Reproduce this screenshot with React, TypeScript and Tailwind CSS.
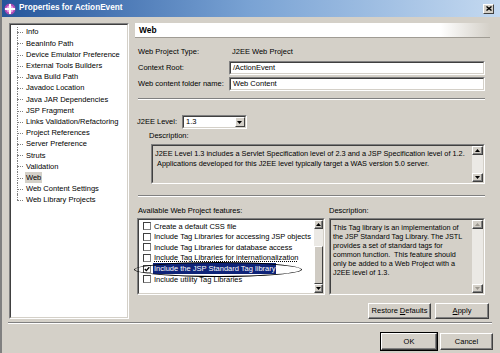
import React from 'react';

const treeItems = [
  'Info',
  'BeanInfo Path',
  'Device Emulator Preference',
  'External Tools Builders',
  'Java Build Path',
  'Javadoc Location',
  'Java JAR Dependencies',
  'JSP Fragment',
  'Links Validation/Refactoring',
  'Project References',
  'Server Preference',
  'Struts',
  'Validation',
  'Web',
  'Web Content Settings',
  'Web Library Projects',
];

const features = [
  { label: 'Create a default CSS file', checked: false },
  { label: 'Include Tag Libraries for accessing JSP objects', checked: false },
  { label: 'Include Tag Libraries for database access', checked: false },
  { label: 'Include Tag Libraries for internationalization', checked: false, underline: true },
  { label: 'Include the JSP Standard Tag library', checked: true, selected: true },
  { label: 'Include utility Tag Libraries', checked: false },
];

function Arrow({ dir, disabled }: { dir: 'up' | 'down'; disabled?: boolean }) {
  return (
    <div className="flex h-[9px] w-full items-center justify-center border border-t-white border-l-white border-r-[#404040] border-b-[#404040] bg-[#d4d0c8] shadow-[inset_-1px_-1px_0_#808080]">
      <svg width="5" height="3" viewBox="0 0 5 3">
        {dir === 'up' ? (
          <polygon points="0,3 5,3 2.5,0" fill={disabled ? '#9a968e' : '#000'} />
        ) : (
          <polygon points="0,0 5,0 2.5,3" fill={disabled ? '#9a968e' : '#000'} />
        )}
      </svg>
    </div>
  );
}

function ScrollBar({ width, thumb, disabled }: { width: string; thumb?: boolean; disabled?: boolean }) {
  return (
    <div className={`flex ${width} shrink-0 flex-col self-stretch`}>
      <Arrow dir="up" disabled={disabled} />
      <div className="flex flex-1 flex-col bg-[#ebe9e5]">
        {thumb && (
          <>
            <div className="h-[17px]" />
            <div className="flex-1 border border-t-white border-l-white border-r-[#404040] border-b-[#404040] bg-[#cfcbc3]" />
          </>
        )}
      </div>
      <Arrow dir="down" disabled={disabled} />
    </div>
  );
}

function Button({ children, w, isDefault }: { children: React.ReactNode; w: string; isDefault?: boolean }) {
  return (
    <div
      className={`flex ${w} items-center justify-center border border-t-white border-l-white border-r-[#404040] border-b-[#404040] bg-[#d4d0c8] shadow-[inset_-1px_-1px_0_#808080] ${
        isDefault ? 'outline outline-1 outline-black' : ''
      }`}
    >
      {children}
    </div>
  );
}

function Sunken({ className, children }: { className: string; children?: React.ReactNode }) {
  return (
    <div className={`border border-t-[#808080] border-l-[#808080] border-r-white border-b-white ${className}`}>
      <div className="flex h-full w-full border border-t-[#404040] border-l-[#404040] border-r-[#d4d0c8] border-b-[#d4d0c8]">
        {children}
      </div>
    </div>
  );
}

function Etched({ className }: { className: string }) {
  return <div className={`h-[2px] border-t border-t-[#808080] border-b border-b-white ${className}`} />;
}

export default function App() {
  return (
    <div className="flex h-[353px] w-[500px] flex-col overflow-hidden border-l-2 border-l-[#808080] bg-[#d4d0c8] font-['Liberation_Sans',Arial,sans-serif] text-[7.5px] leading-none text-black">
      {/* Title bar */}
      <div className="flex h-[17px] shrink-0 items-center bg-gradient-to-r from-[#24559b] via-[#7aa3d4] to-[#c4d9f0] pl-[2px] pr-[6px]">
        <svg width="12" height="12" viewBox="0 0 12 12" className="mr-[3px]">
          <circle cx="6" cy="6" r="5.5" fill="#b04cb4" />
          <circle cx="6" cy="6" r="3.6" fill="#e79be6" />
          <rect x="5" y="1" width="2" height="10" fill="#fff" />
          <rect x="1" y="5" width="10" height="2" fill="#fff" />
        </svg>
        <span className="text-[8.2px] font-bold text-white">Properties for ActionEvent</span>
        <div className="ml-auto flex h-[10px] w-[11px] items-center justify-center border border-t-white border-l-white border-r-[#404040] border-b-[#404040] bg-[#d4d0c8]">
          <svg width="6" height="5" viewBox="0 0 6 5">
            <path d="M0.5 0.5 L5.5 4.5 M5.5 0.5 L0.5 4.5" stroke="#000" strokeWidth="1.4" />
          </svg>
        </div>
      </div>

      {/* Main */}
      <div className="flex pl-[7px] pt-[6px]">
        {/* Tree */}
        <Sunken className="h-[296px] w-[120px] shrink-0 bg-white">
          <div className="flex w-full flex-col bg-white pt-[1.6px]">
            {treeItems.map((item, i) => {
              const last = i === treeItems.length - 1;
              return (
                <div key={item} className="relative flex h-[11.2px] items-center pl-[14px]">
                  <span
                    className={`absolute left-[6px] top-0 border-l border-dotted border-[#808080] ${last ? 'h-1/2' : 'h-full'}`}
                  />
                  <span className="absolute left-[6px] top-1/2 w-[6px] border-t border-dotted border-[#808080]" />
                  <span className={item === 'Web' ? 'bg-[#d4d0c8] px-[1px] py-[1.5px]' : 'px-[1px]'}>{item}</span>
                </div>
              );
            })}
          </div>
        </Sunken>

        {/* Right panel */}
        <div className="ml-[6px] flex w-[355px] flex-col">
          <div className="flex h-[15px] items-center border-b border-b-[#a09c94] bg-gradient-to-r from-white from-[86%] to-[#d4d0c8] pl-[4px] text-[8.4px] font-bold">
            Web
          </div>

          <div className="ml-[3px] mr-[5px] mt-[7px] flex flex-col gap-[2px]">
            <div className="flex h-[14px] items-center">
              <span className="w-[94px]">Web Project Type:</span>
              <span>J2EE Web Project</span>
            </div>
            <div className="flex h-[14px] items-center">
              <span className="w-[91px]">Context Root:</span>
              <Sunken className="h-[14px] flex-1 bg-white">
                <div className="flex w-full items-center bg-white pl-[2px]">/ActionEvent</div>
              </Sunken>
            </div>
            <div className="flex h-[14px] items-center">
              <span className="w-[91px]">Web content folder name:</span>
              <Sunken className="h-[14px] flex-1 bg-white">
                <div className="flex w-full items-center bg-white pl-[2px]">Web Content</div>
              </Sunken>
            </div>
          </div>

          <Etched className="ml-[3px] mr-[5px] mt-[7px]" />

          <div className="ml-[2px] mt-[15px] flex h-[14px] items-center">
            <span className="w-[45px]">J2EE Level:</span>
            <Sunken className="h-[14px] w-[65px] bg-white">
              <div className="flex w-full items-center bg-white pl-[2px]">1.3</div>
              <div className="flex w-[12px] items-center justify-center border border-t-white border-l-white border-r-[#404040] border-b-[#404040] bg-[#d4d0c8]">
                <svg width="5" height="3" viewBox="0 0 5 3">
                  <polygon points="0,0 5,0 2.5,3" fill="#000" />
                </svg>
              </div>
            </Sunken>
          </div>

          <div className="ml-[14px] mt-[2px] flex h-[10px] items-center">Description:</div>

          <Sunken className="ml-[16px] mr-[5px] mt-[3px] h-[40px]">
            <div className="flex-1 pl-[2px] pt-[3px] text-[7.35px] leading-[9.5px]">
              J2EE Level 1.3 includes a Servlet Specification level of 2.3 and a JSP Specification level of 1.2.
              <br />
              &nbsp;Applications developed for this J2EE level typically target a WAS version 5.0 server.
            </div>
            <ScrollBar width="w-[11px]" />
          </Sunken>

          <Etched className="ml-[3px] mr-[5px] mt-[11px]" />

          <div className="ml-[2px] mt-[8px] flex gap-[4px]">
            <div className="flex w-[188px] flex-col">
              <div className="flex h-[11px] items-center pl-[1px]">Available Web Project features:</div>
              <div className="relative mt-[2px]">
                <Sunken className="h-[77px] w-full bg-white">
                  <div className="flex flex-1 flex-col bg-white pl-[4px] pt-[1px]">
                    {features.map((f) => (
                      <div key={f.label} className="flex h-[10.6px] items-center gap-[2px]">
                        <div className="flex h-[8px] w-[8px] shrink-0 items-center justify-center border border-t-[#404040] border-l-[#404040] border-r-[#808080] border-b-[#808080] bg-white">
                          {f.checked && (
                            <svg width="6" height="6" viewBox="0 0 6 6">
                              <path d="M0.8 3 L2.3 4.6 L5.3 1.2" stroke="#000" strokeWidth="1.3" fill="none" />
                            </svg>
                          )}
                        </div>
                        <span
                          className={`whitespace-nowrap px-[1px] py-[1.5px] ${f.selected ? 'bg-[#0e2378] text-white' : ''} ${
                            f.underline ? 'underline decoration-dotted' : ''
                          }`}
                        >
                          {f.label}
                        </span>
                      </div>
                    ))}
                  </div>
                  <ScrollBar width="w-[9px]" thumb />
                </Sunken>
                {/* annotation ellipse */}
                <div className="absolute left-[-3px] top-[44px] h-[15px] w-[168px] rounded-[50%] border border-black" />
              </div>
            </div>

            <div className="flex w-[156px] flex-col">
              <div className="flex h-[11px] items-center">Description:</div>
              <Sunken className="mt-[2px] h-[77px] w-full">
                <div className="flex-1 pl-[2px] pt-[3px] text-[7.25px] leading-[9px]">
                  This Tag library is an implementation of
                  <br />
                  the JSP Standard Tag Library. The JSTL
                  <br />
                  provides a set of standard tags for
                  <br />
                  common function.&nbsp; This feature should
                  <br />
                  only be added to a Web Project with a
                  <br />
                  J2EE level of 1.3.
                </div>
                <ScrollBar width="w-[11px]" disabled />
              </Sunken>
            </div>
          </div>

          <div className="mr-[1px] mt-[8px] flex h-[16px] justify-end gap-[4px]">
            <Button w="w-[63px]">
              Restore <span className="ml-[2px] underline">D</span>efaults
            </Button>
            <Button w="w-[54px]">
              <span className="underline">A</span>pply
            </Button>
          </div>
        </div>
      </div>

      <Etched className="ml-[6px] mr-[8px] mt-[3px]" />

      <div className="mr-[7px] mt-[9px] flex h-[17px] justify-end gap-[3px]">
        <Button w="w-[56px]" isDefault>
          OK
        </Button>
        <Button w="w-[53px]">Cancel</Button>
      </div>
    </div>
  );
}
